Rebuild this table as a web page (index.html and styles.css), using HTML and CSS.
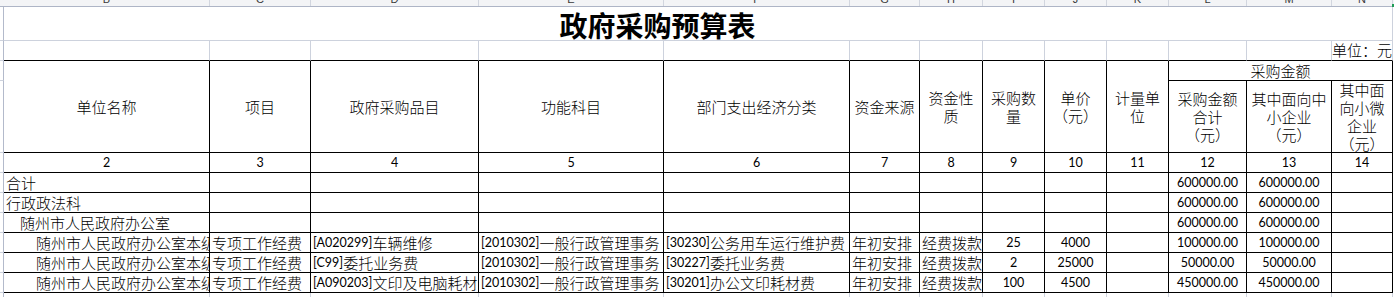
FILE: index.html
```html
<!DOCTYPE html>
<html lang="zh-CN">
<head>
<meta charset="utf-8">
<title>政府采购预算表</title>
<link rel="stylesheet" href="styles.css">
</head>
<body>
<div class="cols">
  <div class="corner"></div>
  <div><span>B</span></div><div><span>C</span></div><div><span>D</span></div><div><span>E</span></div>
  <div><span>F</span></div><div><span>G</span></div><div><span>H</span></div><div><span>I</span></div>
  <div><span>J</span></div><div><span>K</span></div><div><span>L</span></div><div><span>M</span></div>
  <div><span>N</span></div>
</div>
<div class="sheet">
  <div class="rh"></div><div class="title">政府采购预算表</div>

  <div class="rh"></div>
  <div class="u"></div><div class="u"></div><div class="u"></div><div class="u"></div><div class="u"></div><div class="u"></div>
  <div class="u"></div><div class="u"></div><div class="u"></div><div class="u"></div><div class="u"></div><div class="u"></div>
  <div class="u unit">单位：元</div>

  <div class="rh"></div>
  <div class="t hd tall">单位名称</div>
  <div class="t hd tall">项目</div>
  <div class="t hd tall">政府采购品目</div>
  <div class="t hd tall">功能科目</div>
  <div class="t hd tall">部门支出经济分类</div>
  <div class="t hd tall">资金来源</div>
  <div class="t hd tall"><span>资金性<br>质</span></div>
  <div class="t hd tall"><span>采购数<br>量</span></div>
  <div class="t hd tall"><span>单价<br>（元）</span></div>
  <div class="t hd tall"><span>计量单<br>位</span></div>
  <div class="t hd group">采购金额</div>

  <div class="rh"></div>
  <div class="t hd"><span>采购金额<br>合计<br>（元）</span></div>
  <div class="t hd"><span>其中面向中<br>小企业<br>（元）</span></div>
  <div class="t hd"><span>其中面<br>向小微<br>企业<br>（元）</span></div>

  <div class="rh"></div>
  <div class="t ctr num">2</div><div class="t ctr num">3</div><div class="t ctr num">4</div><div class="t ctr num">5</div>
  <div class="t ctr num">6</div><div class="t ctr num">7</div><div class="t ctr num">8</div><div class="t ctr num">9</div>
  <div class="t ctr num">10</div><div class="t ctr num">11</div><div class="t ctr num">12</div><div class="t ctr num">13</div>
  <div class="t ctr num">14</div>

  <div class="rh"></div>
  <div class="t">合计</div><div class="t"></div><div class="t"></div><div class="t"></div><div class="t"></div><div class="t"></div>
  <div class="t"></div><div class="t"></div><div class="t"></div><div class="t"></div>
  <div class="t ctr num">600000.00</div><div class="t ctr num">600000.00</div><div class="t"></div>

  <div class="rh"></div>
  <div class="t">行政政法科</div><div class="t"></div><div class="t"></div><div class="t"></div><div class="t"></div><div class="t"></div>
  <div class="t"></div><div class="t"></div><div class="t"></div><div class="t"></div>
  <div class="t ctr num">600000.00</div><div class="t ctr num">600000.00</div><div class="t"></div>

  <div class="rh"></div>
  <div class="t i1">随州市人民政府办公室</div><div class="t"></div><div class="t"></div><div class="t"></div><div class="t"></div><div class="t"></div>
  <div class="t"></div><div class="t"></div><div class="t"></div><div class="t"></div>
  <div class="t ctr num">600000.00</div><div class="t ctr num">600000.00</div><div class="t"></div>

  <div class="rh"></div>
  <div class="t i2">随州市人民政府办公室本级</div>
  <div class="t">专项工作经费</div>
  <div class="t"><span class="code">[A020299]</span>车辆维修</div>
  <div class="t"><span class="code">[2010302]</span>一般行政管理事务</div>
  <div class="t"><span class="code">[30230]</span>公务用车运行维护费</div>
  <div class="t">年初安排</div>
  <div class="t">经费拨款</div>
  <div class="t ctr num">25</div>
  <div class="t ctr num">4000</div>
  <div class="t"></div>
  <div class="t ctr num">100000.00</div><div class="t ctr num">100000.00</div><div class="t"></div>

  <div class="rh"></div>
  <div class="t i2">随州市人民政府办公室本级</div>
  <div class="t">专项工作经费</div>
  <div class="t"><span class="code">[C99]</span>委托业务费</div>
  <div class="t"><span class="code">[2010302]</span>一般行政管理事务</div>
  <div class="t"><span class="code">[30227]</span>委托业务费</div>
  <div class="t">年初安排</div>
  <div class="t">经费拨款</div>
  <div class="t ctr num">2</div>
  <div class="t ctr num">25000</div>
  <div class="t"></div>
  <div class="t ctr num">50000.00</div><div class="t ctr num">50000.00</div><div class="t"></div>

  <div class="rh"></div>
  <div class="t i2">随州市人民政府办公室本级</div>
  <div class="t">专项工作经费</div>
  <div class="t"><span class="code">[A090203]</span>文印及电脑耗材</div>
  <div class="t"><span class="code">[2010302]</span>一般行政管理事务</div>
  <div class="t"><span class="code">[30201]</span>办公文印耗材费</div>
  <div class="t">年初安排</div>
  <div class="t">经费拨款</div>
  <div class="t ctr num">100</div>
  <div class="t ctr num">4500</div>
  <div class="t"></div>
  <div class="t ctr num">450000.00</div><div class="t ctr num">450000.00</div><div class="t"></div>

  <div class="rh"></div>
  <div></div><div></div><div></div><div></div><div></div><div></div><div></div>
  <div></div><div></div><div></div><div></div><div></div><div></div>
</div>
</body>
</html>
```

FILE: styles.css
```css
* {
  box-sizing: border-box;
}

html, body {
  margin: 0;
  background: #ffffff;
  overflow: hidden;
}

body {
  font-family: "Noto Sans CJK SC", sans-serif;
  font-size: 15px;
  color: #000000;
}

.cols,
.sheet {
  display: grid;
  grid-template-columns: 4px 206px 101px 168px 185px 186px 70px 63px 62px 62px 62px 78px 85px 61px;
}

/* column letter strip (mostly scrolled out of view) */
.cols {
  height: 7px;
  background: #f3f4f6;
  border-bottom: 1px solid #aeb5c6;
  position: relative;
}

.cols > div {
  border-right: 1px solid #d2d6df;
  overflow: hidden;
  display: flex;
  justify-content: center;
  align-items: flex-end;
  font-family: "Liberation Sans", sans-serif;
  font-size: 11px;
  color: #3a3a3a;
}

.cols > .corner {
  border-right: none;
}

.cols span {
  line-height: 10px;
  margin-bottom: 2px;
}

.cols::after {
  content: "";
  position: absolute;
  left: 1392px;
  top: 4px;
  width: 2px;
  height: 3px;
  background: #1f9d55;
}

/* sheet grid */
.sheet {
  grid-template-rows: 34px 20px 20px 72px 20px repeat(6, 20px) 20px;
}

.sheet > div {
  border-right: 1px solid #cdd2dd;
  border-bottom: 1px solid #cdd2dd;
  display: flex;
  align-items: center;
  padding: 0 2px;
  white-space: nowrap;
  overflow: hidden;
  line-height: 18px;
  font-weight: 300;
}

.sheet > .rh {
  border-right-color: #b3bacb;
  padding: 0;
}

.sheet > .title {
  grid-column: span 13;
  justify-content: center;
  padding: 2px 81px 0 0;
  font-size: 28px;
  font-weight: 700;
  line-height: 30px;
}

.sheet > .u {
  border-bottom-color: #000000;
}

.sheet > .unit {
  justify-content: flex-end;
  align-items: flex-end;
  padding: 0 0 1px 0;
}

.sheet > .t {
  border-right-color: #000000;
  border-bottom-color: #000000;
}

.sheet > .hd {
  justify-content: center;
  text-align: center;
}

.sheet > .tall {
  grid-row: span 2;
}

.sheet > .group {
  grid-column: span 3;
}

.sheet > .ctr {
  justify-content: center;
}

.sheet > .num {
  font-family: "Lato", "Liberation Sans", sans-serif;
  font-size: 12.5px;
  font-weight: 400;
}

.sheet > .i1 {
  padding-left: 16px;
}

.sheet > .i2 {
  padding-left: 32px;
}

.code {
  font-family: "Lato", "Liberation Sans", sans-serif;
  font-size: 12.5px;
  font-weight: 400;
}
```
